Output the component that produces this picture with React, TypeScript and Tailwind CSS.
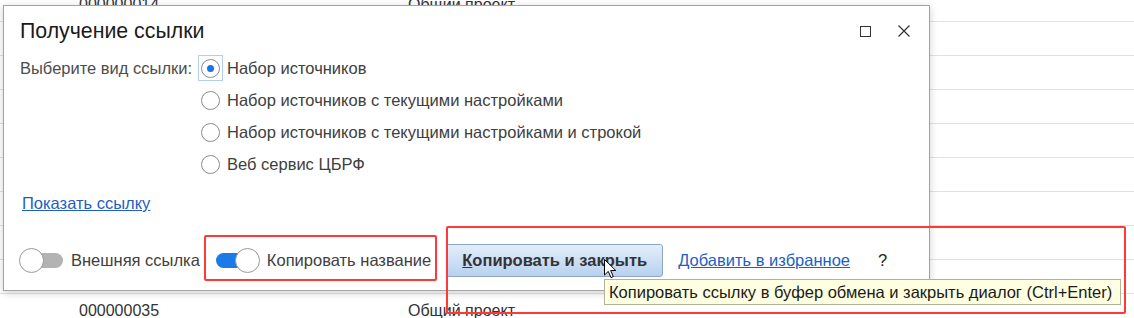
const rows = [
  { num: "000000014", name: "Общий проект" },
  { num: "", name: "" },
  { num: "", name: "" },
  { num: "", name: "" },
  { num: "", name: "" },
  { num: "", name: "" },
  { num: "", name: "" },
  { num: "", name: "" },
  { num: "", name: "" },
  { num: "000000035", name: "Общий проект" },
];

const options = [
  "Набор источников",
  "Набор источников с текущими настройками",
  "Набор источников с текущими настройками и строкой",
  "Веб сервис ЦБРФ",
];

function Radio({ checked }: { checked: boolean }) {
  return (
    <div
      className={
        "flex h-[26px] w-[25px] items-center justify-center border " +
        (checked ? "border-[#b3cfea]" : "border-transparent")
      }
    >
      <div className="flex h-[19px] w-[19px] items-center justify-center rounded-full border border-[#8c8c8c] bg-white">
        {checked && <div className="h-[7px] w-[7px] rounded-full bg-[#1a73e8]" />}
      </div>
    </div>
  );
}

function Toggle({ on }: { on: boolean }) {
  return (
    <div className="relative flex h-[25px] w-[44px] items-center">
      <div
        className={
          "absolute top-[5px] h-[15px] " +
          (on
            ? "left-0 right-[12px] rounded-l-full bg-[#1b7be6]"
            : "left-[12px] right-0 rounded-r-full bg-[#b3b3b3]")
        }
      />
      <div
        className={
          "relative h-[25px] w-[25px] rounded-full border border-[#9a9a9a] bg-white " +
          (on ? "ml-auto" : "")
        }
      />
    </div>
  );
}

export default function App() {
  return (
    <div className="relative h-[318px] w-[1134px] overflow-hidden bg-white font-['Liberation_Sans',Arial,sans-serif] text-[16.5px]">
      {/* background table */}
      <div className="mt-[-12px] flex flex-col text-[16px]">
        {rows.map((r, i) => (
          <div key={i} className="flex h-[34px] items-center border-b border-[#e2e2e2] text-[#333]">
            <div className="w-[408px] pl-[79px]">{r.num}</div>
            <div>{r.name}</div>
          </div>
        ))}
      </div>

      {/* dialog window */}
      <div className="absolute left-[3px] top-[5px] flex h-[286px] w-[927px] flex-col border border-[#a3a3a3] bg-white pl-[16px] shadow-[0_2px_8px_rgba(0,0,0,0.18)]">
        <div className="flex items-center">
          <div className="pt-[12px] text-[21.3px] leading-[26px] text-[#1a1a1a]">Получение ссылки</div>
          <div className="ml-auto mr-[19px] mt-[12px] flex items-center gap-[27px]">
            <div className="h-[11px] w-[11px] border border-[#333]" />
            <svg width="12" height="12" viewBox="0 0 12 12">
              <path d="M0.5 0.5 L11.5 11.5 M11.5 0.5 L0.5 11.5" stroke="#333" strokeWidth="1.2" />
            </svg>
          </div>
        </div>

        <div className="mt-[8px] flex text-[#404040]">
          <div className="flex h-[32px] w-[178px] items-center text-[#4d4d4d]">Выберите вид ссылки:</div>
          <div className="flex flex-col">
            {options.map((o, i) => (
              <div key={o} className="flex h-[32px] items-center">
                <Radio checked={i === 0} />
                <span className="ml-[4px]">{o}</span>
              </div>
            ))}
          </div>
        </div>

        <div className="mt-[13px] leading-[20px]">
          <span className="ml-[2px] text-[#1d5fc4] underline">Показать ссылку</span>
        </div>

        <div className="mt-[25px] flex h-[44px] items-center text-[#404040]">
          <div className="-ml-[1px]">
            <Toggle on={false} />
          </div>
          <span className="ml-[8px]">Внешняя ссылка</span>
          <div className="ml-[16px]">
            <Toggle on={true} />
          </div>
          <span className="ml-[7px]">Копировать название</span>
          <button className="ml-[15px] flex h-[33px] w-[217px] items-center justify-center rounded-[3px] border border-[#8fa6c2] bg-gradient-to-b from-[#e4eefa] to-[#b8d1ef] font-bold text-[#333]">
            <span>
              <span className="underline">К</span>опировать и закрыть
            </span>
          </button>
          <span className="ml-[15px] text-[#1d5fc4] underline">Добавить в избранное</span>
          <span className="ml-[28px] text-[#222]">?</span>
        </div>
      </div>

      {/* tooltip */}
      <div className="absolute left-[604px] top-[279px] flex h-[26px] w-[517px] items-center border border-[#b2b294] bg-[#ffffe1] pl-[4px] text-[#1a1a1a]">
        Копировать ссылку в буфер обмена и закрыть диалог (Ctrl+Enter)
      </div>

      {/* mouse cursor */}
      <svg className="absolute left-[604px] top-[259px]" width="13" height="20" viewBox="0 0 13 20">
        <path d="M0.5 0.5 L0.5 16 L4.3 12.4 L7 18.6 L9.3 17.6 L6.7 11.5 L11.8 11.5 Z" fill="#fff" stroke="#000" strokeWidth="1" />
      </svg>

      {/* red annotation boxes */}
      <div className="absolute left-[204px] top-[235px] h-[46px] w-[233px] rounded-[2px] border-[2.5px] border-[#ff3838]" />
      <div className="absolute left-[446px] top-[226px] h-[88px] w-[680px] rounded-[2px] border-[2.5px] border-[#ff3838]" />
    </div>
  );
}
